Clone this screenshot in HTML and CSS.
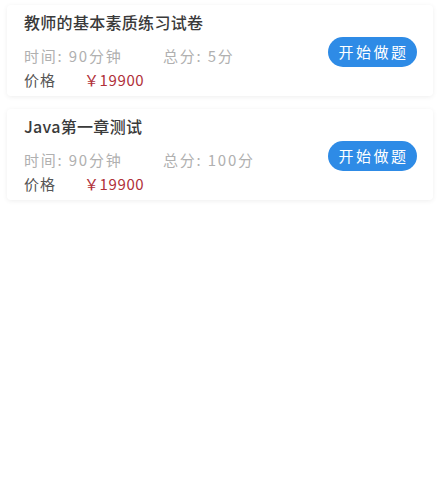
FILE: index.html
```html
<!DOCTYPE html>
<html lang="zh-CN">
<head>
    <meta charset="UTF-8">
    <title>试卷列表</title>
    <link rel="stylesheet" href="styles.css">
</head>
<body>

<div class="paper_list">
    <div class="paper_card">
        <div class="paper_info">
            <div class="paper_title">教师的基本素质练习试卷</div>
            <div class="paper_meta">
                <span class="meta_time">时间: 90分钟</span>
                <span>总分: 5分</span>
            </div>
            <div class="paper_price">
                <span class="price_label">价格</span>
                <span class="price_value">￥19900</span>
            </div>
        </div>
        <button class="start_button">开始做题</button>
    </div>

    <div class="paper_card">
        <div class="paper_info">
            <div class="paper_title">Java第一章测试</div>
            <div class="paper_meta">
                <span class="meta_time">时间: 90分钟</span>
                <span>总分: 100分</span>
            </div>
            <div class="paper_price">
                <span class="price_label">价格</span>
                <span class="price_value">￥19900</span>
            </div>
        </div>
        <button class="start_button">开始做题</button>
    </div>
</div>

</body>
</html>
```

FILE: styles.css
```css
body {
    margin: 0;
    background-color: #fff;
    font-family: "Noto Sans CJK SC", "Noto Sans", sans-serif;
}

.paper_list {
    display: flex;
    flex-direction: column;
    gap: 13px;
    padding: 5px 7px;
}

.paper_card {
    display: flex;
    align-items: center;
    justify-content: space-between;
    padding: 6px 16px 4px 17px;
    border-radius: 4px;
    box-shadow: 0 1px 5px rgba(0, 0, 0, 0.07);
}

.paper_title {
    font-size: 16px;
    font-weight: 500;
    line-height: 22px;
    color: #3a3a3a;
    letter-spacing: 0.3px;
    margin-bottom: 11px;
}

.paper_meta {
    display: flex;
    font-size: 15px;
    line-height: 24px;
    color: #b0b0b0;
    letter-spacing: 1.8px;
}

.meta_time {
    width: 139px;
}

.paper_price {
    display: flex;
    font-size: 15px;
    line-height: 24px;
}

.price_label {
    width: 60px;
    color: #555;
    letter-spacing: 1px;
}

.price_value {
    color: #b03039;
    letter-spacing: 0.6px;
}

.start_button {
    width: 89px;
    height: 30px;
    border: none;
    border-radius: 15px;
    background-color: #2e8be6;
    color: #fff;
    font-family: "Noto Sans CJK SC", sans-serif;
    font-size: 15px;
    font-weight: 400;
    letter-spacing: 2.5px;
    padding: 0 0 0 2px;
}
```
